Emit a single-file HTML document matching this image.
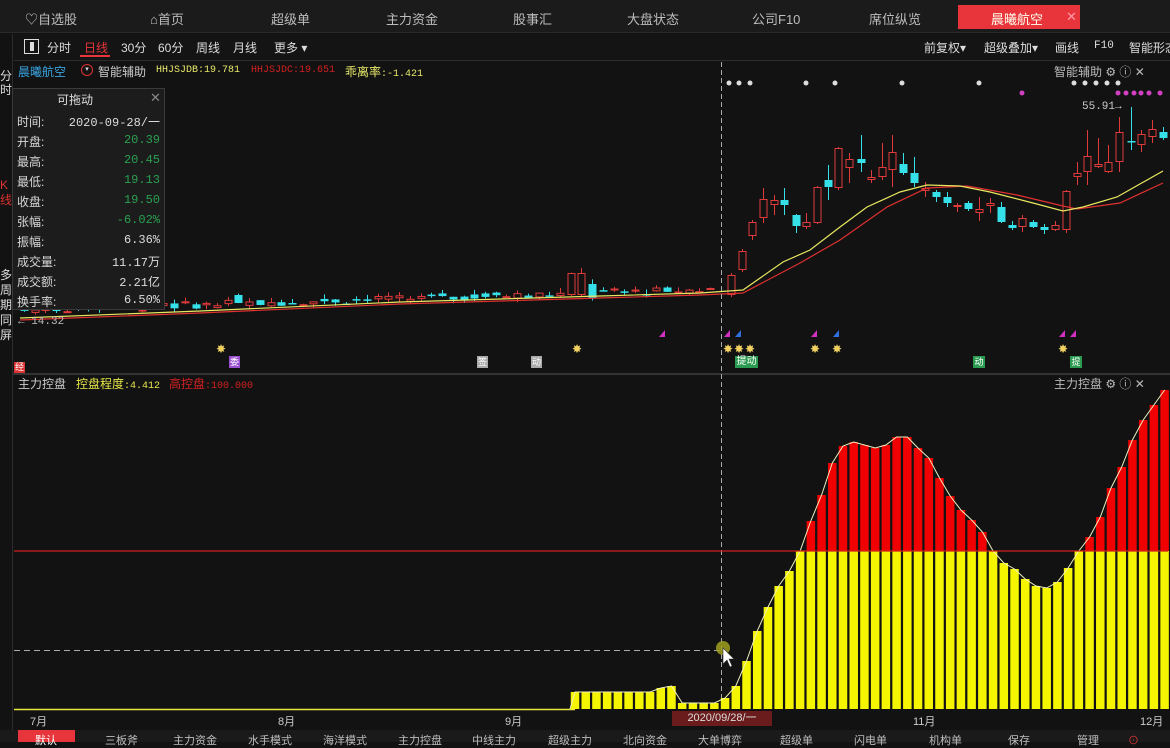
<!DOCTYPE html>
<html><head><meta charset="utf-8">
<style>
*{margin:0;padding:0;box-sizing:border-box}
body{width:1170px;height:742px;background:#121212;overflow:hidden;position:relative;font-family:"Liberation Sans","Noto Sans CJK SC",sans-serif;color:#cfcfcf}
.a{position:absolute;white-space:nowrap}
#top{position:absolute;left:0;top:0;width:1170px;height:33px;background:#1b1b1b;border-bottom:1px solid #2a2a2a}
#top .t{position:absolute;top:9px;font-size:13px;color:#bdbdbd}
#tb{position:absolute;left:14px;top:34px;width:1156px;height:27px;background:#141414;border-bottom:1px solid #2c2c2c}
.s{font-size:12px}
#info{position:absolute;left:12px;top:88px;width:153px;height:222px;background:#1c1c1c;border:1px solid #3a3a3a}
#info .r{position:absolute;left:4px;font-size:12px;color:#d8d8d8;width:143px}
#info .r span{position:absolute;right:0;font-family:"Liberation Mono",monospace}
#bot{position:absolute;left:0;top:730px;width:1170px;height:12px;background:#1a1a1a}
#bot .t{position:absolute;top:2px;font-size:11px;color:#bdbdbd}
</style></head><body>
<div id="top">
<div class="t" style="left:25px">♡自选股</div>
<div class="t" style="left:150px">⌂首页</div>
<div class="t" style="left:271px">超级单</div>
<div class="t" style="left:386px">主力资金</div>
<div class="t" style="left:513px">股事汇</div>
<div class="t" style="left:627px">大盘状态</div>
<div class="t" style="left:752px">公司F10</div>
<div class="t" style="left:869px">席位纵览</div>
<div style="position:absolute;left:958px;top:5px;width:122px;height:24px;background:#e8353b"></div>
<div class="t" style="left:991px;color:#ffe">晨曦航空</div>
<div class="t" style="left:1066px;color:#f9a">✕</div>
</div>
<div style="position:absolute;left:12px;top:34px;width:1px;height:708px;background:#2c2c2c"></div>
<div id="tb"></div>
<div class="a s" style="left:24px;top:39px;width:15px;height:15px;border:1.5px solid #ddd"></div>
<div class="a" style="left:30px;top:42px;width:4px;height:9px;background:#ddd"></div>
<div class="a s" style="left:47px;top:39px;color:#ddd">分时</div>
<div class="a s" style="left:84px;top:39px;color:#e8353b">日线</div>
<div class="a" style="left:80px;top:55px;width:30px;height:2px;background:#e8353b"></div>
<div class="a s" style="left:121px;top:39px;color:#ddd">30分</div>
<div class="a s" style="left:158px;top:39px;color:#ddd">60分</div>
<div class="a s" style="left:196px;top:39px;color:#ddd">周线</div>
<div class="a s" style="left:233px;top:39px;color:#ddd">月线</div>
<div class="a s" style="left:274px;top:39px;color:#ddd">更多 ▾</div>
<div class="a s" style="left:924px;top:39px;color:#ddd">前复权▾</div>
<div class="a s" style="left:984px;top:39px;color:#ddd">超级叠加▾</div>
<div class="a s" style="left:1055px;top:39px;color:#ddd">画线</div>
<div class="a" style="left:1094px;top:40px;color:#ddd;font-size:11px;font-family:'Liberation Mono',monospace">F10</div>
<div class="a s" style="left:1129px;top:39px;color:#ddd">智能形态</div>
<!-- side -->
<div class="a" style="left:0;top:69px;font-size:12px;line-height:14px;width:12px;color:#ddd;white-space:normal">分时</div>
<div class="a" style="left:0;top:178px;font-size:12px;line-height:15px;width:12px;color:#d33;white-space:normal">K线</div>
<div class="a" style="left:0;top:268px;font-size:12px;line-height:15px;width:12px;color:#ddd;white-space:normal">多周期同屏</div>
<!-- info row -->
<div class="a" style="left:18px;top:63px;font-size:12px;color:#3aa3e0">晨曦航空</div>
<div class="a" style="left:81px;top:64px;width:12px;height:12px;border:1px solid #d33;border-radius:50%;font-size:7px;color:#ddd;text-align:center;line-height:10px">▾</div>
<div class="a" style="left:98px;top:63px;font-size:12px;color:#ccc">智能辅助</div>
<div class="a" style="left:156px;top:65px;font-size:10px;color:#e8e86a;font-family:'Liberation Mono',monospace">HHJSJDB:19.781</div>
<div class="a" style="left:251px;top:65px;font-size:10px;color:#d42020;font-family:'Liberation Mono',monospace">HHJSJDC:19.651</div>
<div class="a" style="left:345px;top:63px;font-size:12px;color:#e8e86a">乖离率<span style="font-size:10px;font-family:'Liberation Mono',monospace">:-1.421</span></div>
<div class="a" style="left:1054px;top:63px;font-size:12px;color:#bbb">智能辅助 ⚙ ⓘ ✕</div>
<div class="a" style="left:1054px;top:375px;font-size:12px;color:#bbb">主力控盘 ⚙ ⓘ ✕</div>
<svg id="sv" class="a" style="left:0;top:0" width="1170" height="742"></svg>
<div class="a" style="left:1082px;top:101px;font-size:11px;color:#ccc;font-family:'Liberation Mono',monospace">55.91→</div>
<div class="a" style="left:18px;top:316px;font-size:11px;color:#bbb;font-family:'Liberation Mono',monospace">← 14.32</div>
<div id="info">
<div class="a" style="left:44px;top:2px;font-size:12px;color:#ddd">可拖动</div>
<div class="a" style="left:137px;top:1px;font-size:13px;color:#888">✕</div>
<div class="r" style="top:24px">时间:<span style="color:#ddd">2020-09-28/一</span></div>
<div class="r" style="top:44px">开盘:<span style="color:#2aa050">20.39</span></div>
<div class="r" style="top:64px">最高:<span style="color:#2aa050">20.45</span></div>
<div class="r" style="top:84px">最低:<span style="color:#2aa050">19.13</span></div>
<div class="r" style="top:104px">收盘:<span style="color:#2aa050">19.50</span></div>
<div class="r" style="top:124px">张幅:<span style="color:#2aa050">-6.02%</span></div>
<div class="r" style="top:144px">振幅:<span style="color:#ddd">6.36%</span></div>
<div class="r" style="top:164px">成交量:<span style="color:#ddd">11.17万</span></div>
<div class="r" style="top:184px">成交额:<span style="color:#ddd">2.21亿</span></div>
<div class="r" style="top:204px">换手率:<span style="color:#ddd">6.50%</span></div>
</div>
<div class="a" style="left:18px;top:375px;font-size:12px;color:#ccc">主力控盘</div>
<div class="a" style="left:76px;top:375px;font-size:12px;color:#e8e84a">控盘程度<span style="font-size:10px;font-family:'Liberation Mono',monospace">:4.412</span></div>
<div class="a" style="left:169px;top:375px;font-size:12px;color:#d42020">高控盘<span style="font-size:10px;font-family:'Liberation Mono',monospace">:100.000</span></div>
<!-- axis -->
<div class="a" style="left:30px;top:713px;font-size:11px;color:#ccc">7月</div>
<div class="a" style="left:278px;top:713px;font-size:11px;color:#ccc">8月</div>
<div class="a" style="left:505px;top:713px;font-size:11px;color:#ccc">9月</div>
<div class="a" style="left:913px;top:713px;font-size:11px;color:#ccc">11月</div>
<div class="a" style="left:1140px;top:713px;font-size:11px;color:#ccc">12月</div>
<div class="a" style="left:672px;top:711px;width:100px;height:15px;background:#6a1c1c;font-size:11px;color:#ddd;text-align:center;line-height:15px">2020/09/28/一</div>
<div id="bot">
<div style="position:absolute;left:18px;top:0;width:57px;height:12px;background:#e8353b"></div>
<div class="t" style="left:35px;color:#fff">默认</div>
<div class="t" style="left:105px">三板斧</div>
<div class="t" style="left:173px">主力资金</div>
<div class="t" style="left:248px">水手模式</div>
<div class="t" style="left:323px">海洋模式</div>
<div class="t" style="left:398px">主力控盘</div>
<div class="t" style="left:472px">中线主力</div>
<div class="t" style="left:548px">超级主力</div>
<div class="t" style="left:623px">北向资金</div>
<div class="t" style="left:698px">大单博弈</div>
<div class="t" style="left:780px">超级单</div>
<div class="t" style="left:854px">闪电单</div>
<div class="t" style="left:929px">机构单</div>
<div class="t" style="left:1008px">保存</div>
<div class="t" style="left:1077px">管理</div>
<div class="t" style="left:1128px;color:#d33">⊙</div>
</div>
<div class="a" style="left:14px;top:362px;font-size:9px;width:11px;height:11px;background:#d33;color:#fff;text-align:center;line-height:11px">经</div>
<div class="a" style="left:229px;top:356px;font-size:9px;width:11px;height:12px;background:#9a4fd0;color:#fff;text-align:center;line-height:12px">委</div>
<div class="a" style="left:477px;top:356px;font-size:9px;width:11px;height:12px;background:#aaa;color:#fff;text-align:center;line-height:12px">签</div>
<div class="a" style="left:531px;top:356px;font-size:9px;width:11px;height:12px;background:#aaa;color:#fff;text-align:center;line-height:12px">动</div>
<div class="a" style="left:735px;top:356px;font-size:10px;width:23px;height:12px;background:#2a9a50;color:#fff;text-align:center;line-height:12px">提动</div>
<div class="a" style="left:973px;top:356px;font-size:9px;width:12px;height:12px;background:#2a9a50;color:#fff;text-align:center;line-height:12px">动</div>
<div class="a" style="left:1070px;top:356px;font-size:9px;width:12px;height:12px;background:#2a9a50;color:#fff;text-align:center;line-height:12px">提</div>
<script>
var s='';
function L(x1,y1,x2,y2,c,w,d){s+='<line x1="'+x1+'" y1="'+y1+'" x2="'+x2+'" y2="'+y2+'" stroke="'+c+'" stroke-width="'+(w||1)+'"'+(d?' stroke-dasharray="'+d+'"':'')+'/>';}
function R(x,y,w,h,f,st){s+='<rect x="'+x+'" y="'+y+'" width="'+w+'" height="'+h+'" fill="'+f+'"'+(st?' stroke="'+st+'"':'')+'/>';}
function C(x,o,c,h,l,cy){var col=cy?'#35e0e8':'#e03a3a';L(x,h,x,l,col);var t=Math.min(o,c),b=Math.max(o,c);if(cy)R(x-4,t,8,Math.max(b-t,1.5),col);else R(x-3.5,t+.5,7,Math.max(b-t-1,1),'#121212',col);}
// separators
L(13,374,1170,374,'#333',2);
// left candles
var seed=7;function rnd(){seed=(seed*9301+49297)%233280;return seed/233280;}
for(var x=24;x<720;x+=10.72){var b=316-(x-20)*0.03;var o=b-2-rnd()*8,c=b-2-rnd()*8;var cy=rnd()<.4;if(x>570&&x<582){o=273;c=295;cy=false}if(x>582&&x<595){o=284;c=298;cy=true}if(x>228&&x<240){o=295;c=303;cy=true}C(Math.round(x)+.5,o,c,Math.min(o,c)-rnd()*5,Math.max(o,c)+rnd()*4,cy);}
var d=[[731,275,295,273,297,0],[742,251,270,249,272,0],[752,222,236,220,240,0],[763,199,218,188,223,0],[774,200,205,195,215,0],[784,200,205,188,215,1],[796,215,226,214,233,1],[806,222,227,213,229,0],[817,187,223,186,224,0],[828,180,187,165,200,1],[838,148,188,147,190,0],[849,159,168,153,183,0],[861,159,163,135,172,1],[871,177,180,170,183,0],[882,167,177,143,180,0],[892,152,170,135,187,0],[903,164,173,153,175,1],[914,173,183,157,187,1],[925,188,191,182,197,0],[936,192,197,190,202,1],[947,197,203,192,207,1],[957,205,207,203,212,0],[968,203,209,201,211,1],[979,209,213,197,221,0],[990,203,206,198,213,0],[1001,207,222,202,223,1],[1012,225,228,221,230,1],[1022,218,227,215,232,0],[1033,222,227,220,228,1],[1044,227,230,224,234,1],[1055,225,230,221,231,0],[1066,191,230,190,233,0],[1077,173,177,162,185,0],[1087,156,172,130,185,0],[1098,164,167,138,168,0],[1108,162,172,145,173,0],[1119,132,162,117,172,0],[1131,141,142,107,150,1],[1141,134,145,130,152,0],[1152,129,137,120,143,0],[1163,132,138,127,140,1]];
d.forEach(function(a){C(a[0]+.5,a[1],a[2],a[3],a[4],a[5]);});
// MAs
s+='<polyline fill="none" stroke="#e03030" stroke-width="1.2" points="20,320 200,313 400,304 600,298 700,295 743,293 800,263 840,240 887,207 927,188 967,186 1017,195 1063,206 1077,209 1120,203 1163,183"/>';
s+='<polyline fill="none" stroke="#e8e860" stroke-width="1.2" points="20,318 200,311 400,302 600,296 700,293 743,290 783,262 810,250 840,227 867,207 900,192 927,185 960,186 990,192 1033,203 1063,211 1083,207 1117,197 1163,171"/>';
// stars
[729,739,750,806,835,902,979,1074,1085,1096,1107,1118].forEach(function(x){s+='<circle cx="'+x+'" cy="83" r="2.5" fill="#ddd"/>';});
[1022,1118,1126,1134,1141,1149,1160].forEach(function(x){s+='<circle cx="'+x+'" cy="93" r="2.5" fill="#d040c0"/>';});
[[662,'#d030c0'],[727,'#d030c0'],[738,'#3070e0'],[814,'#d030c0'],[836,'#3070e0'],[1062,'#d030c0'],[1073,'#d030c0']].forEach(function(a){s+='<polygon points="'+(a[0]-3)+',337 '+(a[0]+3)+',330 '+(a[0]+3)+',337" fill="'+a[1]+'"/>';});
[222,578,729,740,751,816,838,1064].forEach(function(x){s+='<text x="'+(x-6)+'" y="353" font-size="12" fill="#f0d060">✸</text>';});
// crosshair
L(721.5,62,721.5,710,'#aaa',1,'5,3');
L(14,650.5,723,650.5,'#aaa',1,'6,4');
// lower pane
L(14,709.5,575,709.5,'#e8e840',1.5);
var t=[692,692,692,692,692,692,692,692,688,686,703,703,703,703,698,686,661,631,607,586,571,551,521,495,463,446,442,445,448,445,437,437,448,458,478,496,510,520,532,551,563,569,579,586,588,582,568,551,537,517,488,467,440,420,405,390];
var pts='570,709 ';
t.forEach(function(y,i){var x=575+10.72*i;var w=8.5;if(y<551){R(x-w/2,551,w,158,'#f5f500');R(x-w/2,y,w,551-y,'#f00000');}else R(x-w/2,y,w,709-y,'#f5f500');pts+=x.toFixed(1)+','+y+' ';});
s+='<polyline fill="none" stroke="#f0f0c0" stroke-width="1" points="'+pts+'"/>';
L(14,551,1168,551,'#d02020',1.2);
s+='<circle cx="723" cy="648" r="7" fill="#a0a020" opacity=".85"/>';
s+='<polygon points="723,648 723,664 727,660 730,667 732,666 729,659 734,659" fill="#fff" stroke="#333" stroke-width=".6"/>';
document.getElementById('sv').innerHTML=s;
</script>
</body></html>
